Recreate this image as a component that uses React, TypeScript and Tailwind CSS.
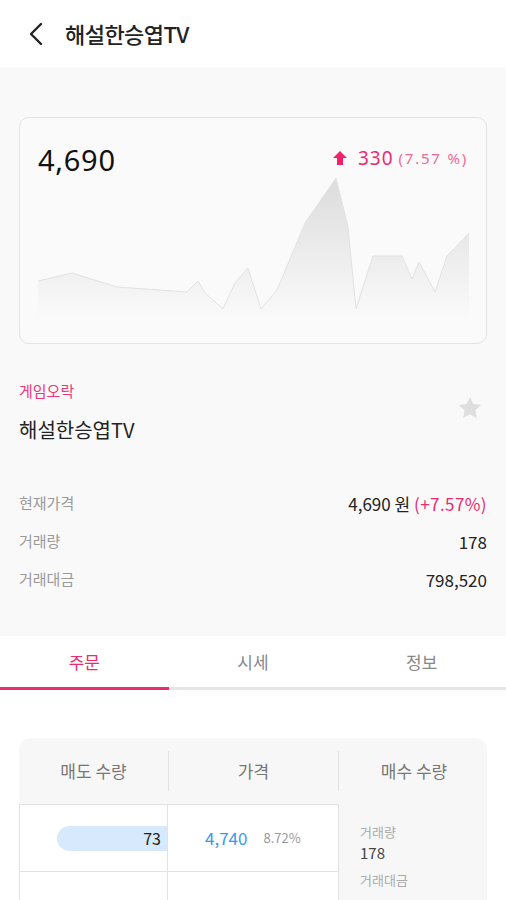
import React from 'react';

const pts: [number, number][] = [
  [38, 281], [72, 273], [117, 287], [187, 292], [198, 281], [205, 293], [223, 309],
  [235, 283], [248, 268], [261, 309], [277, 290], [305, 223], [336, 178], [348, 227],
  [356, 309], [373, 256], [402, 256], [412, 279], [419, 262], [435, 292], [447, 256], [469, 233],
];

function Chart() {
  const ox = 38;
  const oy = 170;
  const line = pts.map(([x, y], i) => `${i ? 'L' : 'M'}${x - ox},${y - oy}`).join(' ');
  const area = `${line} L${469 - ox},${150} L0,${150} Z`;
  return (
    <svg width="432" height="150" viewBox="0 0 432 150" className="block">
      <defs>
        <linearGradient id="fill" x1="0" y1="0" x2="0" y2="1">
          <stop offset="0" stopColor="#dcdcdc" />
          <stop offset="0.85" stopColor="#f6f6f6" />
          <stop offset="1" stopColor="#fafafa" />
        </linearGradient>
      </defs>
      <path d={area} fill="url(#fill)" />
      <path d={line} fill="none" stroke="#e2e2e2" strokeWidth="1" />
    </svg>
  );
}

const font = { fontFamily: '"Noto Sans CJK KR", "Noto Sans", sans-serif' };
const numFont = { fontFamily: '"Noto Sans", sans-serif' };

export default function App() {
  return (
    <div className="w-[506px] h-[900px] overflow-hidden bg-white text-[#222]" style={font}>
      <header className="h-[67px] flex items-center px-[26px] bg-white">
        <svg width="20" height="24" viewBox="0 0 20 24" className="mr-[19px]">
          <path d="M15 2 L5 12 L15 22" fill="none" stroke="#222" strokeWidth="2.4" strokeLinecap="round" strokeLinejoin="round" />
        </svg>
        <h1 className="text-[22px] font-medium tracking-tight">해설한승엽TV</h1>
      </header>

      <section className="bg-[#f9f9f9] px-[19px] pt-[50px] pb-[45px]">
        <div className="h-[227px] border border-[#e4e4e4] rounded-[10px] bg-[#fafafa] pt-[22px] px-[18px] flex flex-col">
          <div className="flex justify-between items-start">
            <span className="text-[29px] leading-[40px] text-[#111] tracking-wide" style={numFont}>4,690</span>
            <div className="flex items-center pt-[6px] text-[#ee2a6f]">
              <svg width="16" height="16" viewBox="0 0 16 16" className="mr-[10px]">
                <path d="M8 1 L15 8 L11 8 L11 15 L5 15 L5 8 L1 8 Z" fill="#f4216a" />
              </svg>
              <span className="text-[19px] leading-[24px] tracking-wider" style={numFont}>330</span>
              <span className="text-[15px] ml-[5px] text-[#ef6a98] tracking-[0.12em]" style={numFont}>(7.57 %)</span>
            </div>
          </div>
          <div className="-mt-[10px]">
            <Chart />
          </div>
        </div>

        <div className="mt-[36px] flex justify-between">
          <div>
            <div className="text-[15px] text-[#f0367a] leading-[22px]">게임오락</div>
            <div className="mt-[14px] text-[20px] leading-[28px]">해설한승엽TV</div>
          </div>
          <svg width="28" height="28" viewBox="0 0 24 24" className="mt-[14px] mr-[3px]">
            <path d="M12 2.5l2.9 6.1 6.6.8-4.9 4.6 1.3 6.6L12 17.3l-5.9 3.3 1.3-6.6L2.5 9.4l6.6-.8z" fill="#dedede" />
          </svg>
        </div>

        <div className="mt-[48px] flex flex-col gap-[15px] text-[15px]">
          <div className="flex justify-between items-center h-[23px]">
            <span className="text-[#9a9a9a]">현재가격</span>
            <span className="text-[17px]">
              4,690 원 <span className="text-[#ee2a6f] tracking-wide">(+7.57%)</span>
            </span>
          </div>
          <div className="flex justify-between items-center h-[23px]">
            <span className="text-[#9a9a9a]">거래량</span>
            <span className="text-[17px]">178</span>
          </div>
          <div className="flex justify-between items-center h-[23px]">
            <span className="text-[#9a9a9a]">거래대금</span>
            <span className="text-[17px]">798,520</span>
          </div>
        </div>
      </section>

      <nav className="flex h-[54px] bg-white">
        <div className="flex-1 flex items-center justify-center text-[17px] text-[#ee2a6f] border-b-[3px] border-[#ee2a6f]">주문</div>
        <div className="flex-1 flex items-center justify-center text-[17px] text-[#888] border-b-[3px] border-[#e6e6e6]">시세</div>
        <div className="flex-1 flex items-center justify-center text-[17px] text-[#888] border-b-[3px] border-[#e6e6e6]">정보</div>
      </nav>

      <div className="px-[19px] pt-[48px]">
        <div className="rounded-t-[12px] bg-[#f7f7f7]">
          <div className="grid grid-cols-[149px_170px_151px] h-[66px] items-center text-[17px] text-[#777]">
            <div className="text-center">매도 수량</div>
            <div className="text-center border-l border-[#e3e3e3] h-[40px] flex items-center justify-center">가격</div>
            <div className="text-center border-l border-[#e3e3e3] h-[40px] flex items-center justify-center">매수 수량</div>
          </div>
          <div className="grid grid-cols-[149px_170px_151px]">
            <div className="flex flex-col">
              <div className="h-[68px] bg-white border border-[#e2e2e2] flex items-center justify-end">
                <div className="w-[110px] h-[25px] bg-[#d7e9fc] rounded-l-full flex items-center justify-end pr-[6px] text-[16px] text-[#222]">73</div>
              </div>
              <div className="h-[68px] bg-white border border-t-0 border-[#e2e2e2] flex items-center justify-end">
                <div className="w-[36px] h-[25px] bg-[#d7e9fc] rounded-l-full mt-[44px]" />
              </div>
            </div>
            <div className="flex flex-col">
              <div className="h-[68px] bg-white border-y border-[#e2e2e2] flex items-center pl-[37px]">
                <span className="text-[17px] text-[#3a9be8]">4,740</span>
                <span className="ml-[16px] text-[13px] text-[#999]">8.72%</span>
              </div>
              <div className="h-[68px] bg-white border-b border-[#e2e2e2]" />
            </div>
            <div className="border-l border-[#e2e2e2] pl-[21px] pt-[18px]">
              <div className="text-[13px] text-[#aaa] leading-[20px]">거래량</div>
              <div className="text-[15px] text-[#444] leading-[22px]">178</div>
              <div className="mt-[6px] text-[13px] text-[#aaa] leading-[20px]">거래대금</div>
            </div>
          </div>
        </div>
      </div>
    </div>
  );
}
